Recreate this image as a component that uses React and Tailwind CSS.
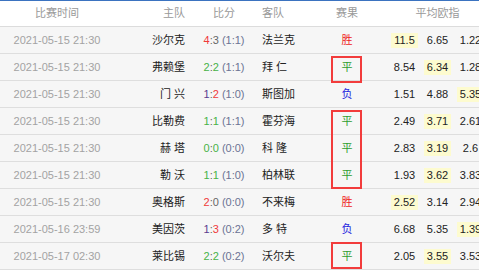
import React from 'react';

const rows = [
  { date: '2021-05-15 21:30', home: '沙尔克', hs: 4, as: 3, half: '(1:1)', away: '法兰克', res: '胜', odds: ['11.5', '6.65', '1.22'], hl: 0 },
  { date: '2021-05-15 21:30', home: '弗赖堡', hs: 2, as: 2, half: '(1:1)', away: '拜 仁', res: '平', odds: ['8.54', '6.34', '1.28'], hl: 1 },
  { date: '2021-05-15 21:30', home: '门 兴', hs: 1, as: 2, half: '(1:0)', away: '斯图加', res: '负', odds: ['1.51', '4.88', '5.35'], hl: 2 },
  { date: '2021-05-15 21:30', home: '比勒费', hs: 1, as: 1, half: '(1:1)', away: '霍芬海', res: '平', odds: ['2.49', '3.71', '2.61'], hl: 1 },
  { date: '2021-05-15 21:30', home: '赫 塔', hs: 0, as: 0, half: '(0:0)', away: '科 隆', res: '平', odds: ['2.83', '3.19', '2.6'], hl: 1 },
  { date: '2021-05-15 21:30', home: '勒 沃', hs: 1, as: 1, half: '(1:0)', away: '柏林联', res: '平', odds: ['1.93', '3.62', '3.83'], hl: 1 },
  { date: '2021-05-15 21:30', home: '奥格斯', hs: 2, as: 0, half: '(0:0)', away: '不来梅', res: '胜', odds: ['2.52', '3.14', '2.94'], hl: 0 },
  { date: '2021-05-16 23:59', home: '美因茨', hs: 1, as: 3, half: '(0:2)', away: '多 特', res: '负', odds: ['6.68', '5.35', '1.39'], hl: 2 },
  { date: '2021-05-17 02:30', home: '莱比锡', hs: 2, as: 2, half: '(0:2)', away: '沃尔夫', res: '平', odds: ['2.05', '3.55', '3.53'], hl: 1 },
];

// red marker boxes over the result column: top, height
const boxes = [[56, 27], [110, 79], [242, 27]];

const resColor = { '胜': 'text-[#ee2222]', '平': 'text-[#2e9e2e]', '负': 'text-[#2727e0]' };

const Score = ({ hs, as, half }) => {
  let h = 'text-[#666]';
  let a = 'text-[#666]';
  if (hs > as) h = 'text-[#f03a3a]';
  else if (hs < as) {
    h = 'text-[#5b3c8f]';
    a = 'text-[#f03a3a]';
  } else {
    h = 'text-[#47b347]';
    a = 'text-[#47b347]';
  }
  return (
    <span>
      <span className={h}>{hs}</span>
      <span className="text-[#666]">:</span>
      <span className={a}>{as}</span>
      <span className="text-[#6b7394]"> {half}</span>
    </span>
  );
};

export default function App() {
  return (
    <div
      className="w-[479px] h-[270px] overflow-hidden bg-white text-[11px]"
      style={{ fontFamily: '"Liberation Sans", "Noto Sans CJK SC", sans-serif' }}
    >
      <div className="relative w-[487px]">
        {/* header */}
        <div className="flex h-[27px] items-center border-t border-[#3b73c0] border-b border-b-[#dcdcdc] text-[#999]">
          <div className="w-[114px] text-center">比赛时间</div>
          <div className="w-[76px] text-right pr-[5px]">主队</div>
          <div className="w-[68px] text-center">比分</div>
          <div className="w-[57px] pl-[4px]">客队</div>
          <div className="w-[64px] text-center">赛果</div>
          <div className="w-[9px]" />
          <div className="w-[99px] text-center">平均欧指</div>
        </div>

        {rows.map((r, i) => (
          <div key={i} className="flex h-[27px] items-center border-b border-[#dedede] bg-[#f6f6f6]">
            <div className="w-[114px] text-center text-[#a3a3a3]">{r.date}</div>
            <div className="w-[76px] text-right pr-[5px] text-[#222] whitespace-pre">{r.home}</div>
            <div className="w-[68px] text-center">
              <Score hs={r.hs} as={r.as} half={r.half} />
            </div>
            <div className="w-[57px] pl-[4px] text-[#222] whitespace-pre">{r.away}</div>
            <div className={`w-[64px] text-center ${resColor[r.res]}`}>{r.res}</div>
            <div className="w-[9px]" />
            <div className="flex w-[99px] text-[#222]">
              {r.odds.map((o, j) => (
                <div key={j} className="w-[33px] flex justify-center">
                  <span className={`px-[3px] leading-[15px] ${j === r.hl ? 'bg-[#fdfbcf]' : ''}`}>{o}</span>
                </div>
              ))}
            </div>
          </div>
        ))}

        {boxes.map(([top, h], k) => (
          <div
            key={k}
            className="absolute left-[331px] w-[31px] border-2 border-[#f23c3c]"
            style={{ top, height: h }}
          />
        ))}
      </div>
    </div>
  );
}
